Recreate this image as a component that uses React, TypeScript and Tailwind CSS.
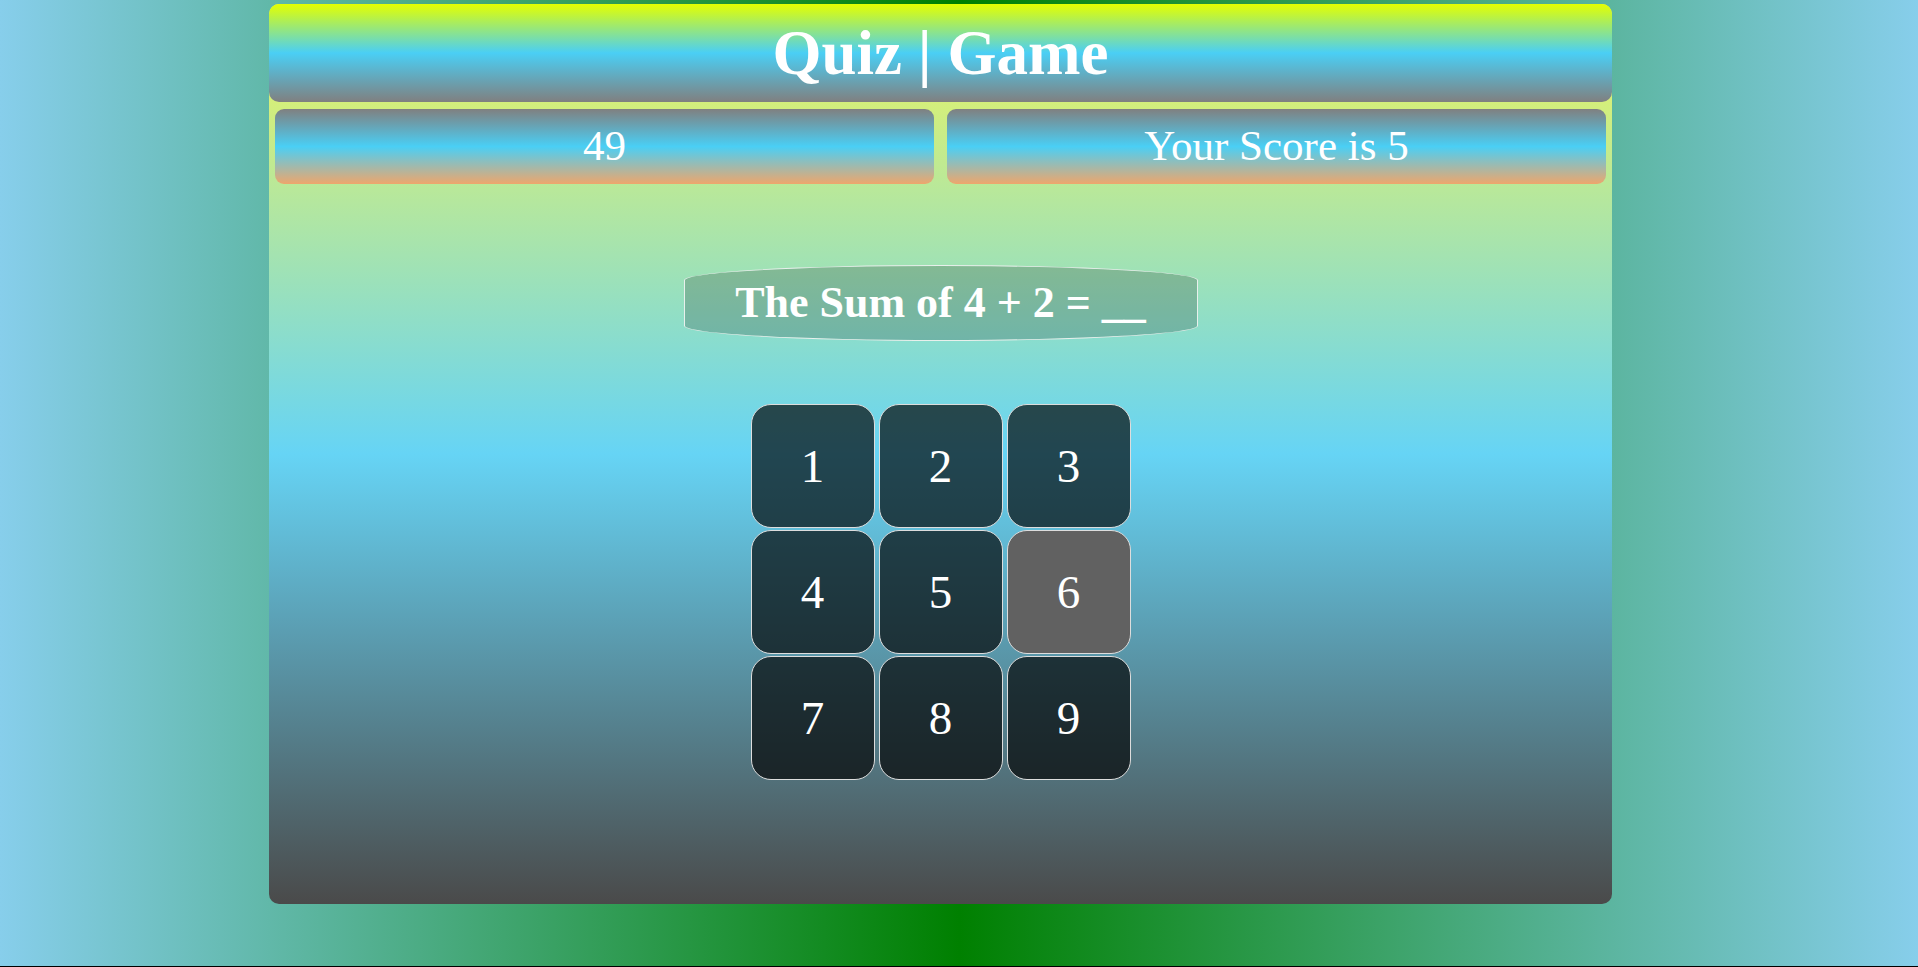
const serif = "font-['Liberation_Serif','Times_New_Roman',serif]";

const Cell = ({ n, active }: { n: number; active?: boolean }) => {
  return (
    <button
      className={`w-[124px] h-[124px] rounded-[20px] border border-[#dddddd] flex items-center justify-center text-white text-[47px] ${
        active ? "bg-[#616161]" : "bg-black/[0.67]"
      }`}
    >
      {n}
    </button>
  );
};

const App = () => {
  const nums = [1, 2, 3, 4, 5, 6, 7, 8, 9];
  return (
    <div
      className={`w-full h-[967px] border-b border-black bg-[linear-gradient(to_right,#87ceeb,#008000,#87ceeb)] pt-[4px] ${serif}`}
    >
      <div className="ml-[269px] w-[1343px] h-[900px] rounded-[10px] bg-[linear-gradient(#f2f65a,#66d4f5,#4a4a4a)] flex flex-col items-center">
        <div className="w-full h-[98px] rounded-[10px] bg-[linear-gradient(#e4ff00,#4acff5,#808080)] flex items-center justify-center">
          <h1 className="text-white text-[63px] font-bold leading-none">
            Quiz | Game
          </h1>
        </div>
        <div className="w-full mt-[7px] px-[6px] flex gap-[13px]">
          <div className="flex-1 h-[75px] rounded-[9px] bg-[linear-gradient(#808080,#4acff5,#eea66c)] flex items-center justify-center text-white text-[43px]">
            49
          </div>
          <div className="flex-1 h-[75px] rounded-[9px] bg-[linear-gradient(#808080,#4acff5,#eea66c)] flex items-center justify-center text-white text-[43px]">
            Your Score is 5
          </div>
        </div>
        <div className="mt-[81px] w-[514px] h-[76px] rounded-[50%/20%] border border-[#e8f0ec] bg-black/[0.18] flex items-center justify-center text-white text-[44px] font-bold">
          The Sum of 4 + 2 = __
        </div>
        <div className="mt-[63px] grid grid-cols-3 gap-x-[4px] gap-y-[2px]">
          {nums.map((n) => (
            <Cell key={n} n={n} active={n === 6} />
          ))}
        </div>
      </div>
    </div>
  );
};

export default App;
